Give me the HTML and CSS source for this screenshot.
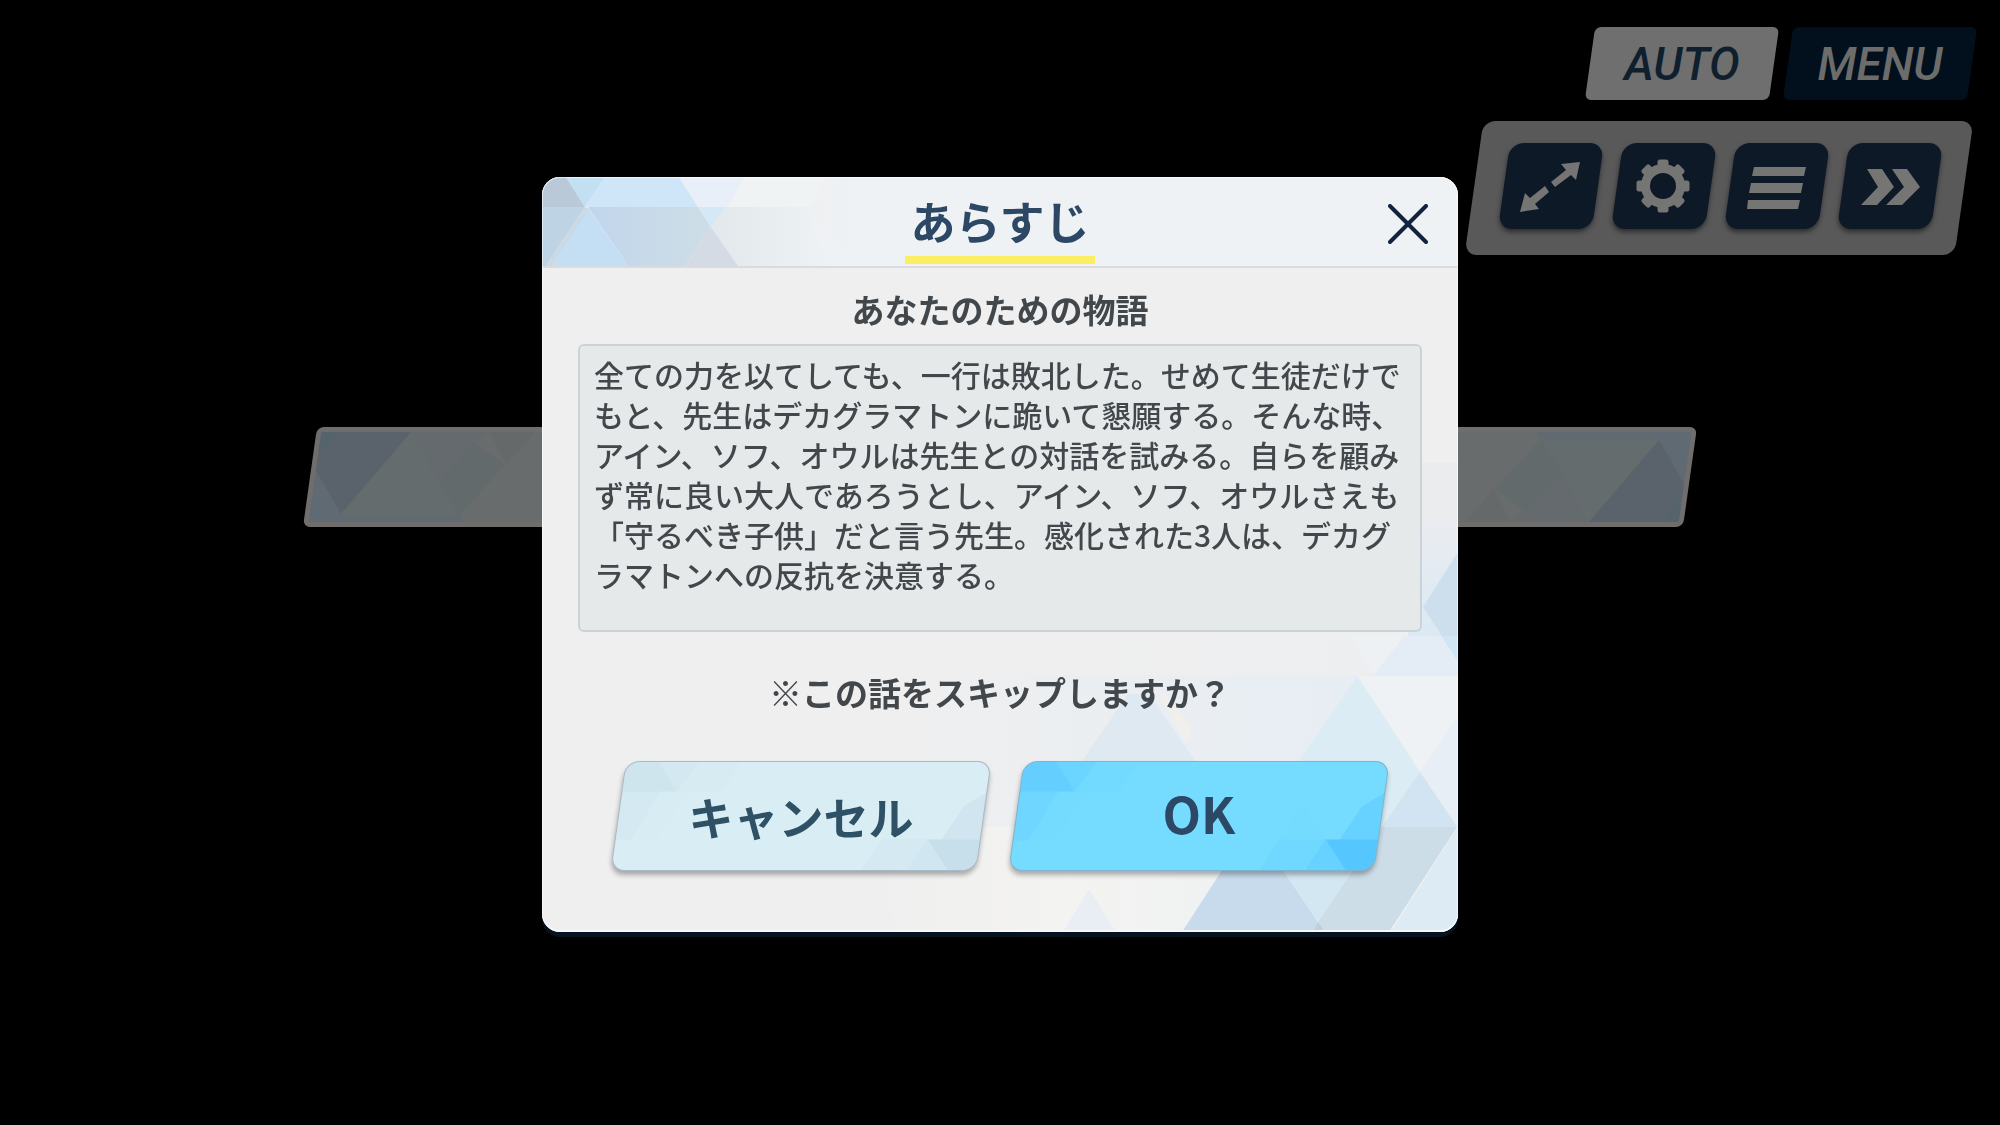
FILE: index.html
```html
<!DOCTYPE html>
<html lang="ja">
<head>
    <meta charset="UTF-8">
    <meta name="viewport" content="width=device-width, initial-scale=1.0">
    <title>あらすじ</title>
    <link rel="stylesheet" href="styles.css">
</head>
<body>
    <!-- shared facet patterns -->
    <svg class="defs" width="0" height="0" aria-hidden="true">
        <symbol id="facets" viewBox="0 0 380 110" preserveAspectRatio="none">
            <g fill="currentColor">
                <polygon points="0,0 48,0 66,30 0,30" opacity="0.32"/>
                <polygon points="48,0 88,0 66,30" opacity="0.18"/>
                <polygon points="88,0 130,0 110,30 66,30" opacity="0.06"/>
                <polygon points="0,30 50,30 20,80 0,80" opacity="0.14"/>
                <polygon points="50,30 80,30 45,80 20,80" opacity="0.03"/>
                <polygon points="316,79 380,79 380,110 336,110" opacity="0.55"/>
                <polygon points="316,79 336,110 296,110" opacity="0.25"/>
                <polygon points="270,79 316,79 296,110 250,110" opacity="0.1"/>
                <polygon points="330,79 352,45 385,25 385,79" opacity="0.26"/>
                <polygon points="316,79 270,79 293,42" opacity="0.03"/>
            </g>
        </symbol>
        <symbol id="bar-facets" viewBox="0 0 250 90">
            <polygon points="34,-1 107,-1 36,82 0,20" fill="#5a636b"/>
            <polygon points="0,-1 34,-1 15,21" fill="#55636a"/>
            <polygon points="0,20 36,82 40,92 0,92" fill="#5f6a73"/>
            <polygon points="107,-1 154,83 36,83" fill="#646c6e"/>
            <polygon points="36,83 154,83 160,92 40,92" fill="#616a71"/>
            <polygon points="107,-1 184,-1 134,51" fill="#646a6d"/>
            <polygon points="134,51 170,11 200,33 154,83" fill="#626a6b"/>
            <polygon points="184,-1 231,-1 201,33" fill="#65696a"/>
        </symbol>
    </svg>

    <header class="hud">
        <div class="hud-row">
            <button class="tab tab-auto">AUTO</button>
            <button class="tab tab-menu">MENU</button>
        </div>
        <nav class="tools">
            <button class="tool" aria-label="全画面">
                <svg viewBox="0 0 94 86">
                    <polygon points="76,19 72,37 67,32 51,44 47,39 62,27 57,21"/>
                    <polygon points="16,69 21,50 26,55 41,43 45,49 31,61 35,66"/>
                </svg>
            </button>
            <button class="tool" aria-label="設定">
                <svg viewBox="0 0 94 86">
                    <g transform="translate(46 43)">
                        <circle r="17.5" fill="none" stroke="#757573" stroke-width="9"/>
                        <rect x="-5.5" y="-26.5" width="11" height="9" rx="2.5"/>
                        <rect x="-5.5" y="-26.5" width="11" height="9" rx="2.5" transform="rotate(45)"/>
                        <rect x="-5.5" y="-26.5" width="11" height="9" rx="2.5" transform="rotate(90)"/>
                        <rect x="-5.5" y="-26.5" width="11" height="9" rx="2.5" transform="rotate(135)"/>
                        <rect x="-5.5" y="-26.5" width="11" height="9" rx="2.5" transform="rotate(180)"/>
                        <rect x="-5.5" y="-26.5" width="11" height="9" rx="2.5" transform="rotate(225)"/>
                        <rect x="-5.5" y="-26.5" width="11" height="9" rx="2.5" transform="rotate(270)"/>
                        <rect x="-5.5" y="-26.5" width="11" height="9" rx="2.5" transform="rotate(315)"/>
                    </g>
                </svg>
            </button>
            <button class="tool" aria-label="ログ">
                <svg viewBox="0 0 94 86">
                    <polygon points="24,24 76,24 74,33 22,33"/>
                    <polygon points="21,40 73,40 71,50 19,50"/>
                    <polygon points="18,57 70,57 68,66 17,66"/>
                </svg>
            </button>
            <button class="tool" aria-label="スキップ">
                <svg viewBox="0 0 94 86">
                    <polygon points="24,26 39,26 51,44 34,62 18,62 35,44"/>
                    <polygon points="49,26 64,26 77,44 59,62 43,62 61,44"/>
                </svg>
            </button>
        </nav>
    </header>

    <div class="choice">
        <svg><use href="#bar-facets"/></svg>
        <svg class="flip"><use href="#bar-facets"/></svg>
    </div>

    <div class="overlay">
        <div class="dialog" role="dialog" aria-labelledby="dialog-title">
            <svg class="dialog-art" viewBox="0 0 600 480" aria-hidden="true">
                <defs>
                    <linearGradient id="fade-a" x1="0" x2="1">
                        <stop offset="0" stop-color="#e5edf5" stop-opacity="0"/>
                        <stop offset="1" stop-color="#e5edf5"/>
                    </linearGradient>
                    <linearGradient id="fade-b" x1="0" x2="1">
                        <stop offset="0" stop-color="#f4f3f1" stop-opacity="0"/>
                        <stop offset="0.4" stop-color="#f3f3f1"/>
                        <stop offset="1" stop-color="#ecf1f4"/>
                    </linearGradient>
                    <linearGradient id="fade-c" x1="0" x2="0" y1="0" y2="1">
                        <stop offset="0" stop-color="#e9ecf0"/>
                        <stop offset="1" stop-color="#dbe9f4"/>
                    </linearGradient>
                </defs>
                <rect x="550" y="11" width="50" height="61" fill="#ebeced"/>
                <rect x="550" y="72" width="50" height="112" fill="url(#fade-c)"/>
                <polygon points="600,100 565,155 584,184 600,184" fill="#cddfed"/>
                <polygon points="583,184 600,184 600,210" fill="#cfe6f6"/>
                <polygon points="240,184 492,184 516,223 270,223" fill="url(#fade-a)" opacity="0.3"/>
                <polygon points="492,184 546,184 516,223" fill="#eef1f3"/>
                <polygon points="546,184 583,184 600,210 600,223 516,223" fill="#e4edf5"/>
                <polygon points="100,223 600,223 600,375 0,375" fill="url(#fade-a)"/>
                <polygon points="270,242 291,242 337,309 224,309" fill="#dae7f2" opacity="0.7"/>
                <polygon points="300,242 308,242 334,276 329,293" fill="#f1efec"/>
                <polygon points="499,225 600,375 395,375" fill="#dcecf5"/>
                <polygon points="500,224 600,224 600,265 562,320" fill="#eef2f4"/>
                <polygon points="600,265 562,320 600,375" fill="#e7eef5"/>
                <polygon points="562,320 524,375 599,375" fill="#d2e4f1"/>
                <polygon points="0,375 524,375 480,480 40,480" fill="url(#fade-b)"/>
                <polygon points="231,437 205,480 258,480" fill="#e9eef5"/>
                <polygon points="392,375 425,418 460,470 456,480 324,480" fill="#c8dbec"/>
                <polygon points="396,375 524,375 460,470" fill="#d3e7f3"/>
                <polygon points="524,375 599,375 531,480 455,480 460,470" fill="#cddde8"/>
                <polygon points="460,470 467,480 455,480" fill="#c2cedb"/>
                <polygon points="600,375 600,480 533,480" fill="#dcebf4"/>
            </svg>

            <div class="dialog-header">
                <svg class="header-art" viewBox="0 0 320 90" aria-hidden="true">
                    <defs>
                        <linearGradient id="head-a" x1="0" x2="1">
                            <stop offset="0" stop-color="#c1d6ec"/>
                            <stop offset="1" stop-color="#cedde7"/>
                        </linearGradient>
                        <linearGradient id="head-b" x1="0" x2="1">
                            <stop offset="0" stop-color="#e2e8eb"/>
                            <stop offset="1" stop-color="#eef2f5"/>
                        </linearGradient>
                        <linearGradient id="head-c" x1="0" x2="1">
                            <stop offset="0" stop-color="#eff0f2"/>
                            <stop offset="1" stop-color="#eef2f5"/>
                        </linearGradient>
                    </defs>
                    <polygon points="0,0 24,0 43,30 0,30" fill="#bac9d8"/>
                    <polygon points="24,0 63,0 43,30" fill="#c3dff2"/>
                    <polygon points="63,0 137,0 156,30 43,30" fill="#cfe6f8"/>
                    <polygon points="137,0 203,0 185,30 156,30" fill="#e9eff8"/>
                    <polygon points="203,0 285,0 267,30 185,30" fill="#eff3f4"/>
                    <polygon points="285,0 320,0 320,90 280,60 267,30" fill="url(#head-c)"/>
                    <polygon points="0,30 43,30 3,90 0,90" fill="#bed3e3"/>
                    <polygon points="43,30 48,32 9,90 3,90" fill="#c9d9e5"/>
                    <polygon points="47,32 87,90 9,90" fill="#c4dff3"/>
                    <polygon points="46,30 156,30 169,50 143,90 87,90" fill="url(#head-a)"/>
                    <polygon points="156,30 185,30 169,50" fill="#d5e8f5"/>
                    <polygon points="169,50 197,90 143,90" fill="#d4dbe4"/>
                    <polygon points="183,30 267,30 285,90 197,90 169,50" fill="url(#head-b)"/>
                </svg>
                <h1 id="dialog-title">あらすじ</h1>
                <button class="close" aria-label="閉じる">
                    <svg viewBox="0 0 40 40">
                        <path d="M2 2L38 38M38 2L2 38"/>
                    </svg>
                </button>
            </div>

            <div class="dialog-body">
                <h2>あなたのための物語</h2>
                <p class="story">全ての力を以てしても、一行は敗北した。せめて生徒だけで<br>もと、先生はデカグラマトンに跪いて懇願する。そんな時、<br>アイン、ソフ、オウルは先生との対話を試みる。自らを顧み<br>ず常に良い大人であろうとし、アイン、ソフ、オウルさえも<br>「守るべき子供」だと言う先生。感化された3人は、デカグ<br>ラマトンへの反抗を決意する。</p>
                <p class="question"><span class="mark">※</span>この話をスキップしますか？</p>
                <div class="actions">
                    <button class="btn btn-cancel">
                        <span class="btn-face"><svg><use href="#facets"/></svg></span>
                        <span class="btn-label">キャンセル</span>
                    </button>
                    <button class="btn btn-ok">
                        <span class="btn-face"><svg><use href="#facets"/></svg></span>
                        <span class="btn-label">OK</span>
                    </button>
                </div>
            </div>
        </div>
    </div>
</body>
</html>
```
FILE: styles.css
```css
:root {
    --navy: #2d4865;
    --ink: #42474c;
    --tile: #0e1928;
    --icon: #757573;
    --slant: -8deg;
}

* {
    box-sizing: border-box;
    margin: 0;
    padding: 0;
}

body {
    min-height: 100vh;
    background: #000;
    font-family: "Noto Sans CJK JP", sans-serif;
    text-spacing-trim: space-all;
    overflow: hidden;
}

button {
    border: 0;
    background: none;
    font-family: inherit;
    cursor: pointer;
}

.defs {
    position: absolute;
}

/* top right controls */
.hud {
    display: flex;
    flex-direction: column;
    align-items: flex-end;
    gap: 21px;
    padding: 27px 28px 0 0;
}

.hud-row {
    display: flex;
    gap: 14px;
}

.tab {
    position: relative;
    z-index: 0;
    width: 184px;
    height: 73px;
    font-family: Roboto, sans-serif;
    font-size: 46px;
    font-style: italic;
    font-weight: 500;
}

.tab::before,
.tool::before {
    content: "";
    position: absolute;
    inset: 0;
    z-index: -1;
    transform: skewX(var(--slant));
}

.tab::before {
    border-radius: 6px;
}

.tab-auto {
    color: #0f1f2e;
}

.tab-auto::before {
    background: #6f6f6f;
}

.tab-menu {
    color: #6c6c6a;
}

.tab-menu::before {
    background: #02101d;
}

.tools {
    position: relative;
    z-index: 0;
    display: flex;
    gap: 19px;
    padding: 22px 27px 26px 30px;
    margin-right: 8px;
}

.tools::before {
    content: "";
    position: absolute;
    inset: 0;
    z-index: -1;
    border-radius: 12px;
    background: #595959;
    transform: skewX(var(--slant));
}

.tool {
    position: relative;
    z-index: 0;
    width: 94px;
    height: 86px;
}

.tool::before {
    border-radius: 14px;
    background: var(--tile);
    box-shadow: 0 3px 5px rgba(0, 0, 0, 0.5);
}

.tool svg {
    display: block;
    width: 100%;
    fill: var(--icon);
}

/* choice bar behind the dialog */
.choice {
    display: flex;
    justify-content: space-between;
    width: 69%;
    height: 100px;
    margin: 172px auto 0;
    border: 5px solid #6f6e6d;
    border-radius: 7px;
    background: #696c6c;
    overflow: hidden;
    transform: skewX(var(--slant));
}

.choice svg {
    width: 250px;
    height: 90px;
    margin-left: -10px;
    transform: skewX(8deg);
}

.choice .flip {
    margin: 0 -10px 0 0;
    transform: skewX(8deg) rotate(180deg);
}

/* dialog */
.overlay {
    position: fixed;
    inset: 0;
    display: flex;
    align-items: center;
    justify-content: center;
    padding-bottom: 16px;
    pointer-events: none;
}

.dialog {
    position: relative;
    width: 916px;
    max-width: 96%;
    border-radius: 18px;
    background: #efefef;
    box-shadow: 0 5px 0 #04131f;
    overflow: hidden;
    pointer-events: auto;
}

.dialog::after {
    content: "";
    position: absolute;
    inset: 0;
    border-radius: 18px;
    box-shadow: inset 0 -2px 0 #f6f8f9, inset 0 0 0 1px rgba(255, 255, 255, 0.6);
    pointer-events: none;
}

.dialog-art {
    position: absolute;
    right: 0;
    bottom: 0;
    width: 600px;
    height: 480px;
}

.dialog-header {
    position: relative;
    display: grid;
    grid-template-columns: 1fr auto 1fr;
    height: 91px;
    border-bottom: 2px solid #d9dcde;
    background: #eef2f5;
    overflow: hidden;
}

.header-art {
    position: absolute;
    left: 0;
    top: 0;
    width: 320px;
    height: 90px;
}

.dialog-header h1 {
    position: relative;
    grid-column: 2;
    height: 87px;
    padding: 10px 5px 0;
    border-bottom: 8px solid #fbee62;
    color: var(--navy);
    font-size: 45px;
    font-weight: 700;
    line-height: 67px;
}

.close {
    justify-self: end;
    width: 60px;
    height: 60px;
    padding: 10px;
    margin: 17px 20px 0 0;
}

.close svg {
    display: block;
    fill: none;
    stroke: #13233f;
    stroke-width: 4;
    stroke-linecap: round;
}

.dialog-body {
    position: relative;
    padding: 18px 36px 61px;
    color: var(--ink);
}

.dialog-body h2,
.question {
    font-size: 33px;
    font-weight: 700;
    line-height: 46px;
    text-align: center;
}

.story {
    min-height: 288px;
    margin-top: 12px;
    padding: 8px 0 0 14px;
    border: 2px solid #ccd3d7;
    border-radius: 6px;
    background: #e5e9ea;
    font-size: 30px;
    font-weight: 500;
    line-height: 40px;
    white-space: nowrap;
}

.question {
    margin: 37px 0 46px;
}

.mark {
    font-weight: 400;
}

.actions {
    display: flex;
    gap: 32px;
    padding: 0 40px;
}

.btn {
    position: relative;
    flex: 1;
    height: 110px;
    font-size: 45px;
    font-weight: 700;
}

.btn-face {
    position: absolute;
    inset: 0;
    border: 1px solid #a9bac6;
    border-radius: 14px;
    box-shadow: 0 4px 5px rgba(0, 0, 0, 0.3);
    overflow: hidden;
    transform: skewX(var(--slant));
}

.btn-face svg {
    position: absolute;
    left: -9px;
    top: 0;
    width: calc(100% + 18px);
    height: 100%;
    transform: skewX(8deg);
}

.btn-label {
    position: relative;
}

.btn-cancel {
    color: #2f5166;
}

.btn-cancel .btn-face {
    background: #d9edf4;
    color: #b8d2e4;
}

.btn-ok {
    padding-bottom: 8px;
    color: var(--navy);
    font-size: 50px;
}

.btn-ok .btn-face {
    background: #76dcff;
    border-color: #7fb4cf;
    color: #3db4ff;
}
```
